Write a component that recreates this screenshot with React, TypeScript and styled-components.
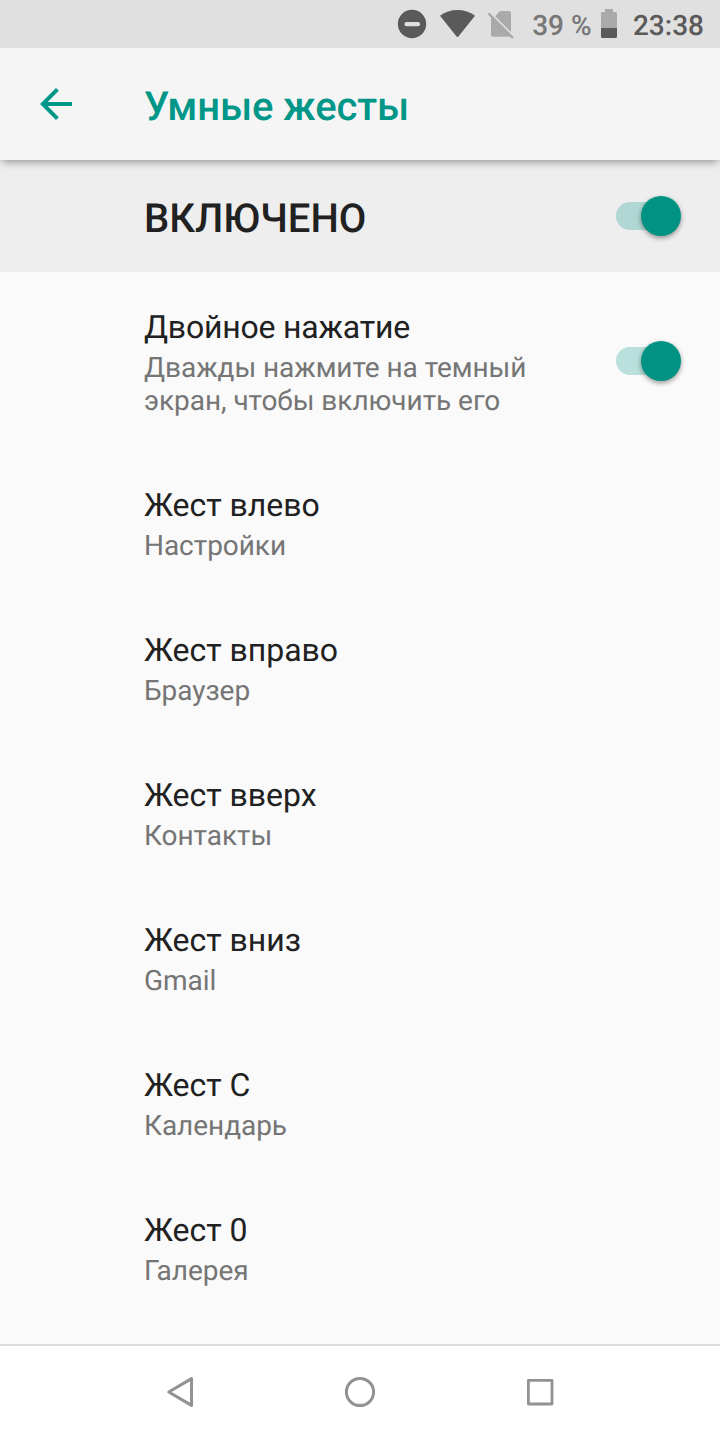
import React from "react";
import styled, { createGlobalStyle } from "styled-components";

const GlobalStyle = createGlobalStyle`
  * { box-sizing: border-box; }
  body { margin: 0; background: #fafafa; }
`;

const Screen = styled.div`
  display: flex;
  flex-direction: column;
  width: 720px;
  height: 1440px;
  overflow: hidden;
  background: #fafafa;
  color: #212121;
  font-family: Roboto, "Noto Sans", sans-serif;
  text-rendering: geometricPrecision;
`;

const StatusBar = styled.header`
  position: relative;
  z-index: 2;
  display: flex;
  align-items: center;
  justify-content: flex-end;
  flex: none;
  height: 48px;
  padding-right: 16px;
  background: #e0e0e0;
`;

const StatusIcons = styled.svg`
  display: block;
  flex: none;
  margin-right: 16.6px;
`;

const BatteryIcon = styled.svg`
  display: block;
  flex: none;
  margin: 0 15px 0 8.4px;
`;

const StatusText = styled.span<{ $color: string }>`
  padding-top: 3px;
  color: ${(p) => p.$color};
  font-size: 28px;
  font-weight: 500;
  line-height: 33px;
  white-space: pre;
`;

const AppBar = styled.div`
  position: relative;
  z-index: 1;
  display: flex;
  align-items: center;
  flex: none;
  height: 112px;
  padding-left: 32px;
  background: #f5f5f5;
  box-shadow: 0 4px 8px -2px rgba(0, 0, 0, 0.38);
`;

const BackButton = styled.button`
  width: 48px;
  height: 48px;
  margin: 0 64px 0 0;
  padding: 0;
  border: 0;
  background: none;
  svg { display: block; }
`;

const Heading = styled.h1`
  margin: 0;
  padding-top: 4px;
  color: #009688;
  font-size: 40px;
  font-weight: 500;
  letter-spacing: -0.12px;
  line-height: 47px;
  white-space: nowrap;
`;

const MasterRow = styled.div`
  display: flex;
  align-items: center;
  justify-content: space-between;
  flex: none;
  height: 112px;
  padding: 0 36px 0 144px;
  background: #eeeeee;
`;

const MasterLabel = styled.div`
  padding-top: 4px;
  font-size: 40px;
  font-weight: 500;
  line-height: 47px;
`;

const Track = styled.div`
  display: flex;
  align-items: center;
  justify-content: flex-end;
  width: 62px;
  height: 28px;
  margin-right: 6px;
  border-radius: 14px;
  background: rgba(0, 150, 136, 0.26);
`;

const Thumb = styled.div`
  flex: none;
  width: 40px;
  height: 40px;
  margin-right: -3px;
  border-radius: 50%;
  background: #009384;
  box-shadow: 0 2px 5px rgba(0, 0, 0, 0.4);
`;

const List = styled.main`
  flex: 1;
  min-height: 0;
`;

const Row = styled.div`
  display: flex;
  align-items: center;
  justify-content: space-between;
  padding: 0 36px 0 144px;
`;

const RowText = styled.div`
  width: 400px;
  padding: 36px 0 33px;
`;

const RowTitle = styled.div<{ $tight?: boolean }>`
  margin-bottom: 5px;
  font-size: 32px;
  letter-spacing: ${(p) => (p.$tight ? "-0.21px" : "-0.03px")};
  line-height: 38px;
`;

const RowSummary = styled.div`
  color: #757575;
  font-size: 28px;
  letter-spacing: -0.05px;
  line-height: 33px;
`;

const NavBar = styled.nav`
  display: flex;
  justify-content: center;
  flex: none;
  height: 96px;
  padding-bottom: 2px;
  border-top: 2px solid #dcdcdc;
  background: #fff;
`;

const NavButton = styled.button`
  display: flex;
  align-items: center;
  justify-content: center;
  width: 180px;
  padding: 0;
  border: 0;
  background: none;
`;

const Switch = () => (
  <Track role="switch" aria-checked="true">
    <Thumb />
  </Track>
);

const items: { title: string; summary: string; toggle?: boolean }[] = [
  { title: "Двойное нажатие", summary: "Дважды нажмите на темный экран, чтобы включить его", toggle: true },
  { title: "Жест влево", summary: "Настройки" },
  { title: "Жест вправо", summary: "Браузер" },
  { title: "Жест вверх", summary: "Контакты" },
  { title: "Жест вниз", summary: "Gmail" },
  { title: "Жест C", summary: "Календарь" },
  { title: "Жест 0", summary: "Галерея" },
];

export default function App() {
  return (
    <Screen>
      <GlobalStyle />
      <StatusBar>
        <StatusIcons width="120" height="48" viewBox="396 0 120 48">
          <circle cx="412" cy="24" r="14.2" fill="#5a5a5a" />
          <rect x="404.5" y="22" width="15.5" height="4.3" rx="2" fill="#e0e0e0" />
          <path d="M440 15.8C450 8.1 465 8.1 475 15.8L458.6 36.3Q457.5 37.5 456.4 36.3Z" fill="#5a5a5a" />
          <path d="M500 11H508.5Q511 11 511 13.5V32L495.2 16.2ZM491 16L511 36.7H493.5Q491 36.7 491 34.2Z" fill="#aaa" />
          <path d="M488.5 13.5L513 38" stroke="#aaa" strokeWidth="2.4" />
        </StatusIcons>
        <StatusText $color="#777777">39 %</StatusText>
        <BatteryIcon width="18" height="48" viewBox="600 0 18 48">
          <path d="M605 9H613V12H615.5Q617 12 617 13.5V28H601V13.5Q601 12 602.5 12H605Z" fill="#aaa" />
          <path d="M601 28H617V36.5Q617 38 615.5 38H602.5Q601 38 601 36.5Z" fill="#5a5a5a" />
        </BatteryIcon>
        <StatusText $color="#5a5a5a">23:38</StatusText>
      </StatusBar>
      <AppBar>
        <BackButton aria-label="Назад">
          <svg width="48" height="48" viewBox="0 0 24 24" fill="#009688">
            <path d="M20 11H7.83l5.59-5.59L12 4l-8 8 8 8 1.41-1.41L7.83 13H20v-2z" />
          </svg>
        </BackButton>
        <Heading>Умные жесты</Heading>
      </AppBar>
      <MasterRow>
        <MasterLabel>ВКЛЮЧЕНО</MasterLabel>
        <Switch />
      </MasterRow>
      <List>
        {items.map((item) => (
          <Row key={item.title}>
            <RowText>
              <RowTitle $tight={item.toggle}>{item.title}</RowTitle>
              <RowSummary>{item.summary}</RowSummary>
            </RowText>
            {item.toggle && <Switch />}
          </Row>
        ))}
      </List>
      <NavBar>
        <NavButton aria-label="Назад">
          <svg width="32" height="32" viewBox="0 0 32 32" fill="none" stroke="#929292" strokeWidth="3" strokeLinejoin="round">
            <path d="M27.5 2.6V29.4L4.8 16Z" />
          </svg>
        </NavButton>
        <NavButton aria-label="Домой">
          <svg width="32" height="32" viewBox="0 0 32 32" fill="none" stroke="#929292" strokeWidth="3">
            <circle cx="16" cy="16" r="13.6" />
          </svg>
        </NavButton>
        <NavButton aria-label="Обзор">
          <svg width="32" height="32" viewBox="0 0 32 32" fill="none" stroke="#929292" strokeWidth="2.8" strokeLinejoin="round">
            <rect x="4.4" y="4.4" width="23.6" height="23.6" />
          </svg>
        </NavButton>
      </NavBar>
    </Screen>
  );
}
